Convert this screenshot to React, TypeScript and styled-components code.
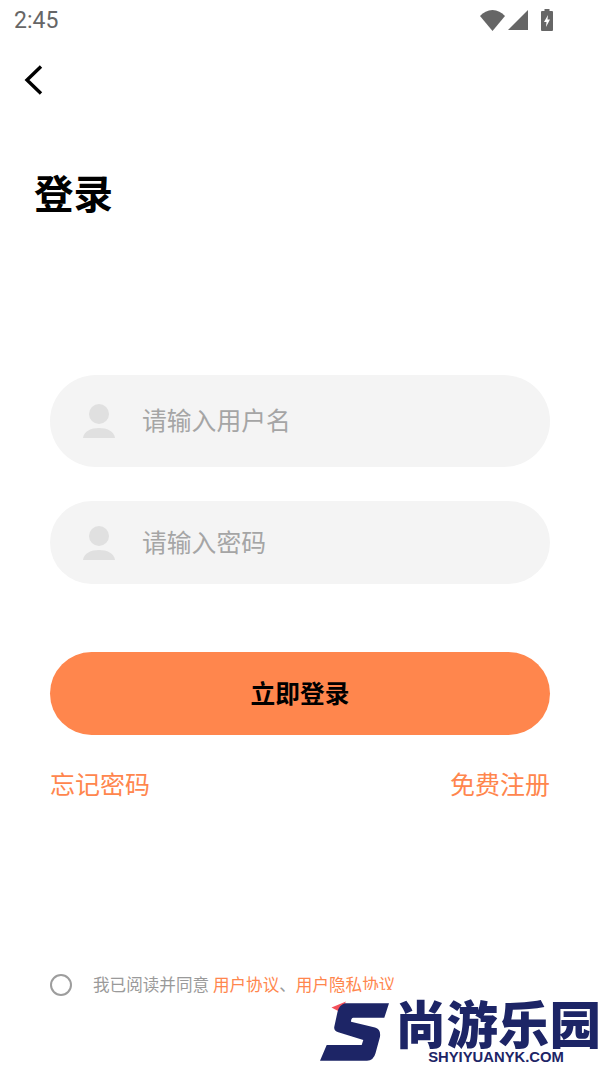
import React from 'react'
import styled, { createGlobalStyle } from 'styled-components'

const CJK = `"Noto Sans CJK SC", "Noto Sans", sans-serif`

const GlobalStyle = createGlobalStyle`
  html, body {
    margin: 0;
    padding: 0;
    background: #fff;
  }
  * {
    box-sizing: border-box;
  }
`

const Page = styled.div`
  position: relative;
  width: 600px;
  height: 1066px;
  overflow: hidden;
  background: #fff;
  font-family: ${CJK};
`

const StatusBar = styled.div`
  display: flex;
  align-items: center;
  justify-content: space-between;
  height: 40px;
  padding: 0 47px 0 14px;
`

const Time = styled.span`
  font-family: Roboto, sans-serif;
  font-size: 23px;
  color: #666;
`

const StatusIcons = styled.div`
  display: flex;
  align-items: center;
  gap: 3px;
`

const BackRow = styled.div`
  display: flex;
  align-items: center;
  height: 80px;
  padding-left: 22px;
`

const Title = styled.h1`
  margin: 47px 0 0 34px;
  font-size: 39.5px;
  line-height: 50px;
  font-weight: 700;
  color: #000;
`

const Form = styled.div`
  display: flex;
  flex-direction: column;
  margin: 158px 50px 0;
`

const Field = styled.div<{ $height: number; $gap: number }>`
  display: flex;
  align-items: center;
  height: ${p => p.$height}px;
  margin-bottom: ${p => p.$gap}px;
  padding-left: 33px;
  gap: 27px;
  border-radius: 46px;
  background: #f4f4f4;
`

const Placeholder = styled.span`
  margin-bottom: 4px;
  font-size: 24.8px;
  color: #a5a5a5;
`

const Submit = styled.button`
  height: 83px;
  padding: 0 0 4px;
  border: 0;
  border-radius: 42px;
  background: #ff864d;
  color: #000;
  font-family: inherit;
  font-size: 24.7px;
  font-weight: 700;
`

const Links = styled.div`
  display: flex;
  justify-content: space-between;
  margin-top: 30px;
  font-size: 25px;
  line-height: 36px;
  color: #ff864d;
`

const Agreement = styled.div`
  position: absolute;
  left: 50px;
  top: 972px;
  display: flex;
  align-items: center;
  gap: 21px;
  font-size: 16.6px;
  line-height: 24px;
  color: #9a9a9a;
`

const Radio = styled.span`
  width: 22px;
  height: 22px;
  margin-top: 2px;
  border: 2px solid #9d9d9d;
  border-radius: 50%;
`

const Accent = styled.span`
  color: #ff864d;
`

const Watermark = styled.div`
  position: absolute;
  left: 320px;
  top: 1000px;
  display: flex;
  gap: 7px;

  &::before {
    content: '';
    position: absolute;
    left: 44px;
    top: -10px;
    width: 36px;
    height: 10px;
    background: #fff;
  }
`

const WatermarkText = styled.div`
  display: flex;
  flex-direction: column;
  align-items: center;
  width: 202px;
`

const WatermarkName = styled.div`
  margin-top: -3px;
  font-size: 51.5px;
  line-height: 50px;
  font-weight: 900;
  white-space: nowrap;
  color: #1d2566;
`

const WatermarkUrl = styled.div`
  margin: 3px 4px 0 0;
  font-family: "Liberation Sans", Arial, sans-serif;
  font-size: 14.8px;
  line-height: 14px;
  font-weight: 700;
  color: #1d2566;
`

const UserIcon = () => (
  <svg width="32" height="34" viewBox="0 0 32 34">
    <circle cx="16" cy="10" r="10" fill="#e0e0e0" />
    <path d="M0 34C1 27 8 24 16 24S31 27 32 34Z" fill="#e0e0e0" />
  </svg>
)

const App: React.FC = () => (
  <Page>
    <GlobalStyle />
    <StatusBar>
      <Time>2:45</Time>
      <StatusIcons>
        <svg width="25" height="21" viewBox="0 0 25 21">
          <path d="M0 6C3.5 2.5 7.5 0 12.5 0S21.5 2.5 25 6L12.5 21Z" fill="#666" />
        </svg>
        <svg width="20" height="20" viewBox="0 0 20 20">
          <path d="M20 0V20H0Z" fill="#666" />
        </svg>
        <svg width="12" height="22" viewBox="0 0 12 22" style={{ marginLeft: 10 }}>
          <path d="M3.5 0H8.5V2H11Q12 2 12 3V21Q12 22 11 22H1Q0 22 0 21V3Q0 2 1 2H3.5Z" fill="#666" />
          <path d="M7 6L3 13H5.5L5 18L9 10.5H6.5Z" fill="#fff" />
        </svg>
      </StatusIcons>
    </StatusBar>
    <BackRow>
      <svg width="24" height="36" viewBox="0 0 24 36">
        <path d="M19 4.5L5 18L19 31.5" fill="none" stroke="#000" strokeWidth="3.4" />
      </svg>
    </BackRow>
    <Title>登录</Title>
    <Form>
      <Field $height={92} $gap={34}>
        <UserIcon />
        <Placeholder>请输入用户名</Placeholder>
      </Field>
      <Field $height={83} $gap={68}>
        <UserIcon />
        <Placeholder>请输入密码</Placeholder>
      </Field>
      <Submit>立即登录</Submit>
      <Links>
        <span>忘记密码</span>
        <span>免费注册</span>
      </Links>
    </Form>
    <Agreement>
      <Radio />
      <span>
        我已阅读并同意 <Accent>用户协议</Accent>、<Accent>用户隐私协议</Accent>
      </span>
    </Agreement>
    <Watermark>
      <svg width="70" height="62" viewBox="0 0 70 62">
        <path d="M11.5 7.5L26 1.5L20 12Z" fill="#f4505a" />
        <path
          d="M25 3.3H69L64.3 17.7H33.3Q31 18 31 21.7L55 27.5Q61 29 60 36.7L55.5 53.3Q53.5 60.7 47 60.7H0L6.7 45H41.7L43.3 40L18.3 32.3Q13.5 30.5 14.3 26.7L17.5 12Q19 5 25 3.3Z"
          fill="#1d2566"
        />
      </svg>
      <WatermarkText>
        <WatermarkName>尚游乐园</WatermarkName>
        <WatermarkUrl>SHYIYUANYK.COM</WatermarkUrl>
      </WatermarkText>
    </Watermark>
  </Page>
)

export default App
